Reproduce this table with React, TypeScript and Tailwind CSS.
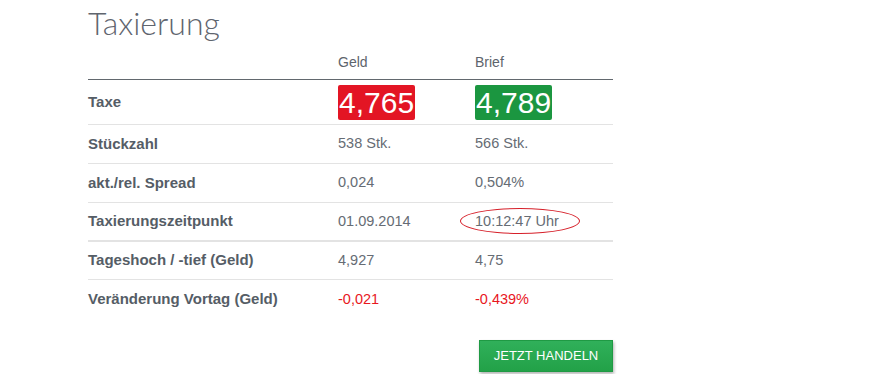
import React from 'react'

type Row = {
  label: string
  geld: React.ReactNode
  brief: React.ReactNode
  red?: boolean
  thick?: boolean
  h: string
}

const rows: Row[] = [
  { label: 'Stückzahl', geld: '538 Stk.', brief: '566 Stk.', h: 'h-[39px]' },
  { label: 'akt./rel. Spread', geld: '0,024', brief: '0,504%', h: 'h-[39px]' },
  { label: 'Taxierungszeitpunkt', geld: '01.09.2014', brief: '10:12:47 Uhr', h: 'h-[39px]', thick: true },
  { label: 'Tageshoch / -tief (Geld)', geld: '4,927', brief: '4,75', h: 'h-[38px]' },
  { label: 'Veränderung Vortag (Geld)', geld: '-0,021', brief: '-0,439%', red: true, h: 'h-[39px]' },
]

export default function App() {
  return (
    <div className="w-[889px] h-[374px] bg-white overflow-hidden font-['Liberation_Sans',Arial,sans-serif]">
      <div className="ml-[88px] w-[525px]">
        <h1 className="pt-[3px] h-[46px] text-[32px] leading-[40px] font-light text-[#5f656e] font-['Lato',sans-serif]">
          Taxierung
        </h1>

        <div className="flex h-[34px] items-center border-b border-[#62686e] text-[14px] text-[#5d646c]">
          <div className="w-[250px]" />
          <div className="w-[137px]">Geld</div>
          <div>Brief</div>
        </div>

        <div className="flex h-[45px] items-center border-b border-[#e3e3e3] pt-[1px]">
          <div className="w-[250px] text-[15px] font-bold text-[#555d66]">Taxe</div>
          <div className="w-[137px]">
            <span className="inline-block h-[35px] px-[1px] bg-[#e31524] rounded-[2px] text-white text-[30px] leading-[35px]">4,765</span>
          </div>
          <div>
            <span className="inline-block h-[35px] px-[1px] bg-[#1b9640] rounded-[2px] text-white text-[30px] leading-[35px]">4,789</span>
          </div>
        </div>

        {rows.map((r, i) => (
          <div
            key={r.label}
            className={`flex items-center ${r.h} ${
              i === rows.length - 1 ? '' : r.thick ? 'border-b-2 border-[#e3e3e3]' : 'border-b border-[#e3e3e3]'
            }`}
          >
            <div className="w-[250px] text-[15px] font-bold text-[#555d66]">{r.label}</div>
            <div className={`w-[137px] text-[14.5px] ${r.red ? 'text-[#e8171e]' : 'text-[#666c74]'}`}>{r.geld}</div>
            <div className={`relative text-[14.5px] ${r.red ? 'text-[#e8171e]' : 'text-[#666c74]'}`}>
              {r.brief}
              {r.thick && (
                <span className="absolute left-[-15px] top-[-3px] w-[120px] h-[26px] border border-[#d6202a] rounded-[50%]" />
              )}
            </div>
          </div>
        ))}

        <div className="flex justify-end mt-[21px]">
          <button className="w-[134px] h-[32px] bg-gradient-to-b from-[#30b05a] to-[#22a148] border border-[#1f9a44] text-white text-[13px] shadow-[1px_2px_3px_rgba(0,0,0,0.3)]">
            JETZT HANDELN
          </button>
        </div>
      </div>
    </div>
  )
}
